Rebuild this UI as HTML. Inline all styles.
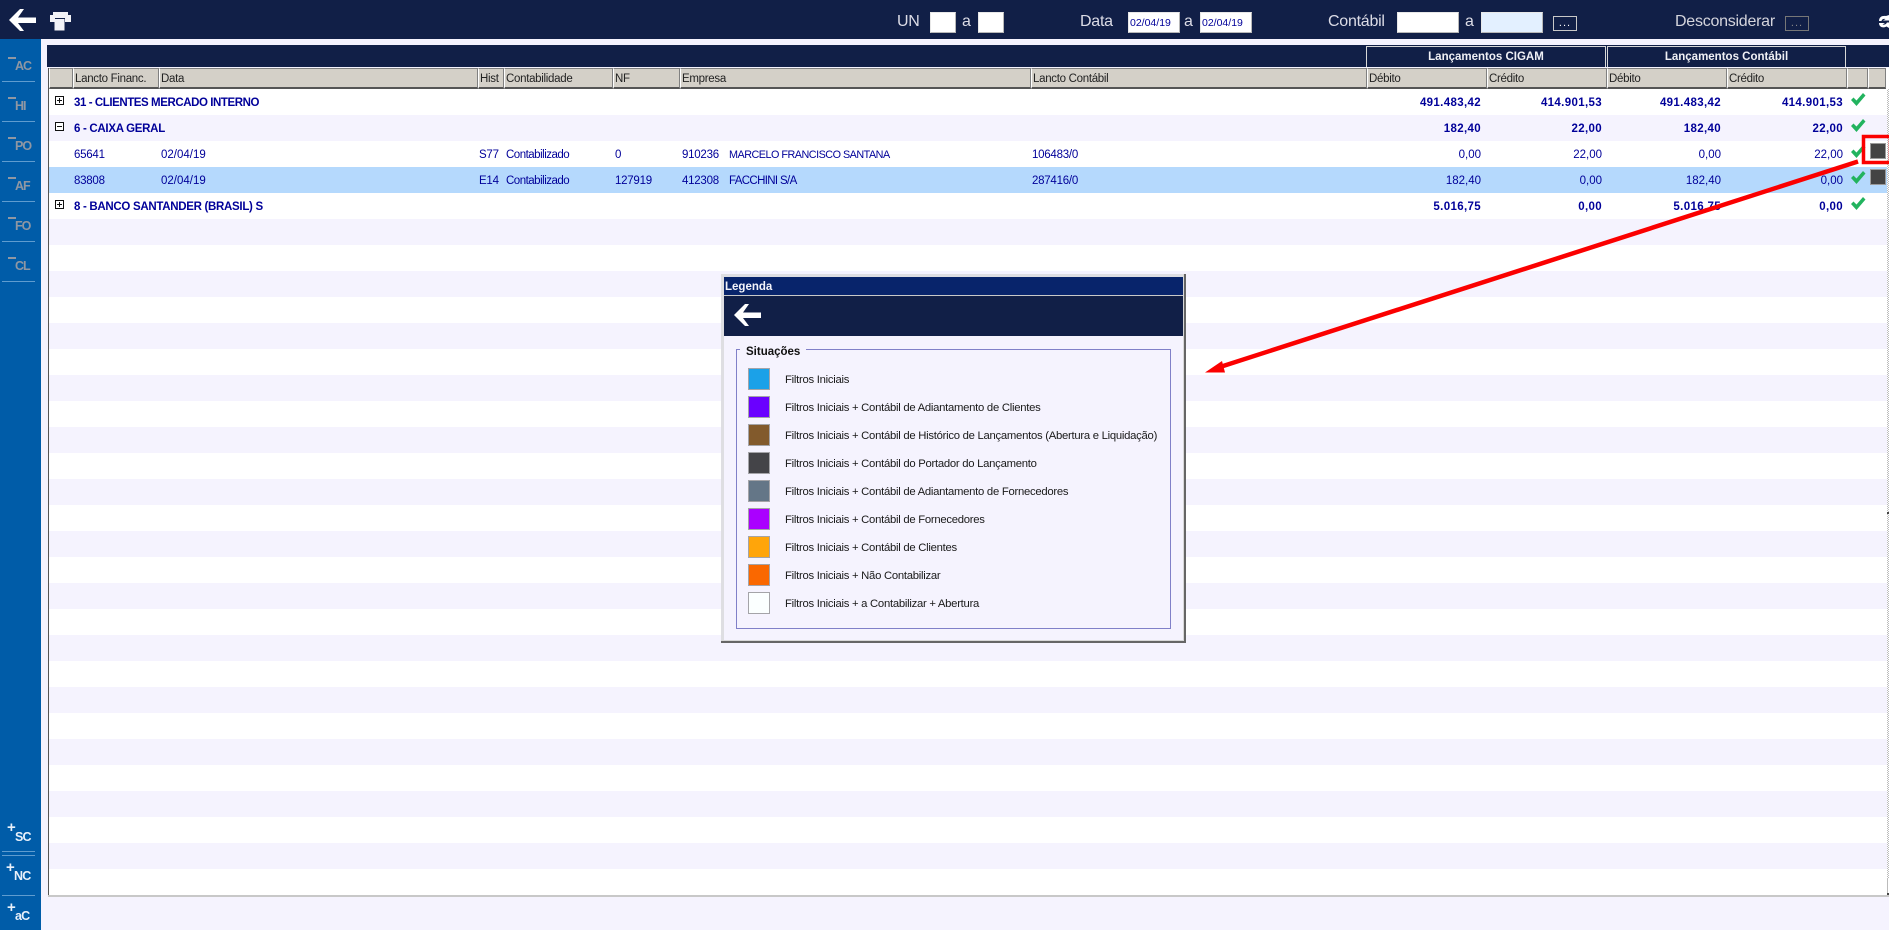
<!DOCTYPE html>
<html><head><meta charset="utf-8"><title>Legenda</title>
<style>
html,body{margin:0;padding:0;width:1889px;height:930px;overflow:hidden;background:#f5f3fe;font-family:"Liberation Sans",sans-serif}
div,span,svg{position:absolute}
#top{left:0;top:0;width:1889px;height:39px;background:#111f47}
#side{left:0;top:39px;width:41px;height:891px;background:#005ca8}
.lbl{color:#dcdce6;font-size:16px;line-height:20px;top:12px;white-space:nowrap;font-weight:400;letter-spacing:-.25px}
.inp{background:#fff;border:1px solid #e8e8e8;border-right-color:#b8b8b8;border-bottom-color:#b8b8b8;box-sizing:border-box;top:12px;height:21px;color:#000099;font-size:10.5px;line-height:20px;padding-left:1px;letter-spacing:0;white-space:nowrap}
.btn{box-sizing:border-box;top:16px;height:15px;border:1px solid #c8c8c8;color:#fff;font-size:11px;line-height:12px;text-align:center;letter-spacing:1px;background:#111f47}
.sl{background:#5f9ccf;left:2px;width:33px;height:1px}
.sm{background:#8f97a3;left:8px;width:8px;height:2px}
.st{color:#8f97a3;font-weight:bold;font-size:12.5px;line-height:14px;white-space:nowrap;letter-spacing:-1px}
.pw{color:#e8f0fa;font-weight:bold;font-size:15px;line-height:14px}
.bw{color:#e8f0fa;font-weight:bold;font-size:12.5px;line-height:14px;white-space:nowrap;letter-spacing:-.8px}
#grid{left:48px;top:68px;width:1841px;height:828px;background:repeating-linear-gradient(#fff 0,#fff 26px,#f5f3fe 26px,#f5f3fe 52px) 0 21px no-repeat;background-size:100% 806px;border-left:1px solid #555;box-sizing:border-box}
#hdr{left:47px;top:45px;width:1842px;height:22px;background:#111f47}
.gh{top:46px;height:21px;box-sizing:border-box;border:1px solid #d8d8d8;border-bottom:none;color:#f0f0f5;font-weight:bold;font-size:11.5px;line-height:21px;text-align:center}
.ch{top:68px;height:21px;box-sizing:border-box;background:#d4d0c8;border:1px solid #fff;border-right:1px solid #808080;border-bottom:2px solid #555;border-top:1px solid #808080;color:#222;font-size:11.5px;line-height:20px;padding-left:1px;white-space:nowrap;letter-spacing:-.3px}
.t{color:#000099;font-size:11.5px;line-height:28px;height:26px;white-space:nowrap;letter-spacing:-.25px}
.b{color:#000099;font-weight:bold;font-size:11.5px;line-height:28px;height:26px;white-space:nowrap;letter-spacing:-.3px}
.n{text-align:right;width:110px;letter-spacing:0}
.b.n{letter-spacing:.35px}
.sw{left:748px;width:22px;height:22px;box-sizing:border-box;border:1.5px solid #a4a4a8}
.lt{left:785px;color:#1a1a1a;font-size:11.3px;line-height:24px;white-space:nowrap;letter-spacing:-.27px}
.tree{left:55px;width:9px;height:9px;box-sizing:border-box;border:1px solid #111;background:#fff}
.sq{left:1870px;width:14px;height:14px;background:#444;border:1px solid #9a9a9a;box-sizing:content-box}
</style></head><body>

<div id="top"></div>
<svg style="left:9px;top:9px" width="28" height="22" viewBox="0 0 28 22"><path d="M0 11L11 0H15L9 8.500H27V14H9L15 22H11Z" fill="#fff"/></svg>
<svg style="left:50px;top:12px" width="21" height="19" viewBox="0 0 21 19"><path d="M3 0H18V3H3ZM0 3H21V10H15V6H5V10H0Z" fill="#f2f2f6"/><path d="M4.500 7H14.500V18.500H4.500Z" fill="#f2f2f6"/></svg>
<span class="lbl" style="left:897px">UN</span>
<div class="inp" style="left:930px;width:26px"></div>
<span class="lbl" style="left:962px">a</span>
<div class="inp" style="left:978px;width:26px"></div>
<span class="lbl" style="left:1080px">Data</span>
<div class="inp" style="left:1128px;width:52px">02/04/19</div>
<span class="lbl" style="left:1184px">a</span>
<div class="inp" style="left:1200px;width:52px">02/04/19</div>
<span class="lbl" style="left:1328px">Contábil</span>
<div class="inp" style="left:1397px;width:62px"></div>
<span class="lbl" style="left:1465px">a</span>
<div class="inp" style="left:1481px;width:62px;background:#e3f0ff"></div>
<div class="btn" style="left:1553px;width:24px">...</div>
<span class="lbl" style="left:1675px;color:#d4d4dc">Desconsiderar</span>
<div class="btn" style="left:1785px;width:24px;border-color:#777;color:#888">...</div>
<svg style="left:1878px;top:14px" width="11" height="15" viewBox="0 0 11 15"><path d="M1 7C1 3 4 1.500 8 2L11 1V6.500H5L7.500 5C5.500 4.500 4 5 3.500 7ZM1 9H7L4.500 10.500C6.500 11 8 10.500 9 8.500H11V14L8.500 12.500C5 14.500 1 13 1 9Z" fill="#fff"/></svg>

<div id="side"></div>
<div class="sm" style="top:57px"></div><span class="st" style="left:15px;top:59px">AC</span><div class="sl" style="top:81px"></div>
<div class="sm" style="top:97px"></div><span class="st" style="left:15px;top:99px">HI</span><div class="sl" style="top:121px"></div>
<div class="sm" style="top:137px"></div><span class="st" style="left:15px;top:139px">PO</span><div class="sl" style="top:161px"></div>
<div class="sm" style="top:177px"></div><span class="st" style="left:15px;top:179px">AF</span><div class="sl" style="top:201px"></div>
<div class="sm" style="top:217px"></div><span class="st" style="left:15px;top:219px">FO</span><div class="sl" style="top:241px"></div>
<div class="sm" style="top:257px"></div><span class="st" style="left:15px;top:259px">CL</span><div class="sl" style="top:281px"></div>

<span class="pw" style="left:7px;top:821px">+</span><span class="bw" style="left:15px;top:830px">SC</span>
<div class="sl" style="top:851px"></div><div class="sl" style="top:855px"></div>
<span class="pw" style="left:6px;top:861px">+</span><span class="bw" style="left:14px;top:869px">NC</span>
<div class="sl" style="top:895px"></div>
<span class="pw" style="left:7px;top:901px">+</span><span class="bw" style="left:15px;top:909px">aC</span>

<div id="hdr"></div>
<div class="gh" style="left:1366px;width:240px">Lançamentos CIGAM</div>
<div class="gh" style="left:1607px;width:239px">Lançamentos Contábil</div>
<div id="grid"></div>
<div style="left:48px;top:895px;width:1841px;height:2px;background:#c8c8c8"></div>

<div class="ch" style="left:49px;width:24px"></div>
<div class="ch" style="left:73px;width:86px">Lancto Financ.</div>
<div class="ch" style="left:159px;width:319px">Data</div>
<div class="ch" style="left:478px;width:26px">Hist</div>
<div class="ch" style="left:504px;width:109px">Contabilidade</div>
<div class="ch" style="left:613px;width:67px">NF</div>
<div class="ch" style="left:680px;width:351px">Empresa</div>
<div class="ch" style="left:1031px;width:336px">Lancto Contábil</div>
<div class="ch" style="left:1367px;width:120px">Débito</div>
<div class="ch" style="left:1487px;width:120px">Crédito</div>
<div class="ch" style="left:1607px;width:120px">Débito</div>
<div class="ch" style="left:1727px;width:120px">Crédito</div>
<div class="ch" style="left:1847px;width:21px"></div>
<div class="ch" style="left:1868px;width:18px"></div>

<div style="left:49px;top:167px;width:1838px;height:26px;background:#b5d9fd"></div>

<div class="tree" style="top:96px"><div style="left:1px;top:3px;width:5px;height:1px;background:#111"></div><div style="left:3px;top:1px;width:1px;height:5px;background:#111"></div></div>
<div class="tree" style="top:122px"><div style="left:1px;top:3px;width:5px;height:1px;background:#111"></div></div>
<div class="tree" style="top:200px"><div style="left:1px;top:3px;width:5px;height:1px;background:#111"></div><div style="left:3px;top:1px;width:1px;height:5px;background:#111"></div></div>

<span class="b" style="left:74px;top:89px;letter-spacing:-.43px">31 - CLIENTES MERCADO INTERNO</span>
<span class="b n" style="left:1371px;top:89px">491.483,42</span><span class="b n" style="left:1492px;top:89px">414.901,53</span><span class="b n" style="left:1611px;top:89px">491.483,42</span><span class="b n" style="left:1733px;top:89px">414.901,53</span>

<span class="b" style="left:74px;top:115px">6 - CAIXA GERAL</span>
<span class="b n" style="left:1371px;top:115px">182,40</span><span class="b n" style="left:1492px;top:115px">22,00</span><span class="b n" style="left:1611px;top:115px">182,40</span><span class="b n" style="left:1733px;top:115px">22,00</span>

<span class="t" style="left:74px;top:141px">65641</span><span class="t" style="left:161px;top:141px;letter-spacing:0">02/04/19</span><span class="t" style="left:479px;top:141px">S77</span><span class="t" style="left:506px;top:141px;letter-spacing:-.5px">Contabilizado</span><span class="t" style="left:615px;top:141px">0</span><span class="t" style="left:682px;top:141px">910236</span><span class="t" style="left:729px;top:141px;font-size:10.8px;letter-spacing:-.5px">MARCELO FRANCISCO SANTANA</span><span class="t" style="left:1032px;top:141px">106483/0</span>
<span class="t n" style="left:1371px;top:141px">0,00</span><span class="t n" style="left:1492px;top:141px">22,00</span><span class="t n" style="left:1611px;top:141px">0,00</span><span class="t n" style="left:1733px;top:141px">22,00</span>

<span class="t" style="left:74px;top:167px">83808</span><span class="t" style="left:161px;top:167px;letter-spacing:0">02/04/19</span><span class="t" style="left:479px;top:167px">E14</span><span class="t" style="left:506px;top:167px;letter-spacing:-.5px">Contabilizado</span><span class="t" style="left:615px;top:167px">127919</span><span class="t" style="left:682px;top:167px">412308</span><span class="t" style="left:729px;top:167px;letter-spacing:-.65px">FACCHINI S/A</span><span class="t" style="left:1032px;top:167px">287416/0</span>
<span class="t n" style="left:1371px;top:167px">182,40</span><span class="t n" style="left:1492px;top:167px">0,00</span><span class="t n" style="left:1611px;top:167px">182,40</span><span class="t n" style="left:1733px;top:167px">0,00</span>

<span class="b" style="left:74px;top:193px">8 - BANCO SANTANDER (BRASIL) S</span>
<span class="b n" style="left:1371px;top:193px">5.016,75</span><span class="b n" style="left:1492px;top:193px">0,00</span><span class="b n" style="left:1611px;top:193px">5.016,75</span><span class="b n" style="left:1733px;top:193px">0,00</span>

<svg style="left:1850px;top:92px" width="16" height="15" viewBox="0 0 16 15"><path d="M1 8L3.500 5.500L6.500 8.500L13 1L15.500 3.500L6.500 14Z" fill="#22b35e"/></svg>
<svg style="left:1850px;top:118px" width="16" height="15" viewBox="0 0 16 15"><path d="M1 8L3.500 5.500L6.500 8.500L13 1L15.500 3.500L6.500 14Z" fill="#22b35e"/></svg>
<svg style="left:1850px;top:144px" width="16" height="15" viewBox="0 0 16 15"><path d="M1 8L3.500 5.500L6.500 8.500L13 1L15.500 3.500L6.500 14Z" fill="#22b35e"/></svg>
<svg style="left:1850px;top:170px" width="16" height="15" viewBox="0 0 16 15"><path d="M1 8L3.500 5.500L6.500 8.500L13 1L15.500 3.500L6.500 14Z" fill="#22b35e"/></svg>
<svg style="left:1850px;top:196px" width="16" height="15" viewBox="0 0 16 15"><path d="M1 8L3.500 5.500L6.500 8.500L13 1L15.500 3.500L6.500 14Z" fill="#22b35e"/></svg>

<div class="sq" style="top:143px"></div>
<div class="sq" style="top:169px"></div>

<div style="left:1886px;top:68px;width:3px;height:21px;background:#fff"></div>
<div style="left:1887px;top:89px;width:2px;height:806px;background:repeating-conic-gradient(#bbb 0 25%,#fff 0 50%) 0 0/2px 2px"></div>
<div style="left:1887px;top:512px;width:2px;height:2px;background:#444"></div>
<div style="left:1887px;top:879px;width:2px;height:16px;background:#fff;border-left:1px solid #bbb;box-sizing:border-box"></div>
<div style="left:1887px;top:893px;width:2px;height:2px;background:#444"></div>

<!-- Legend -->
<div style="left:721px;top:274px;width:465px;height:369px;background:#f5f3fe;box-shadow:inset -2px -2px 0 #666,inset -3px -3px 0 #d8d8d8,inset 3px 3px 0 #dedee2"></div>
<div style="left:724px;top:277px;width:459px;height:18px;background:#08246b;color:#f4f4fa;font-weight:bold;font-size:11.5px;line-height:20px;padding-left:1px;box-sizing:border-box">Legenda</div>
<div style="left:724px;top:295px;width:459px;height:1px;background:#c8c8c8"></div>
<div style="left:724px;top:296px;width:459px;height:40px;background:#111f47"></div>
<svg style="left:734px;top:304px" width="28" height="22" viewBox="0 0 28 22"><path d="M0 11L11 0H15L9 8.500H27V14H9L15 22H11Z" fill="#fff"/></svg>
<div style="left:736px;top:349px;width:435px;height:280px;box-sizing:border-box;border:1px solid #8080c8"></div>
<div style="left:740px;top:345px;width:66px;height:10px;background:#f5f3fe"></div>
<span style="left:746px;top:345px;color:#111;font-weight:bold;font-size:11.5px;line-height:14px">Situações</span>

<div class="sw" style="top:368px;background:#1ba1e8"></div><span class="lt" style="top:368px">Filtros Iniciais</span>
<div class="sw" style="top:396px;background:#6a00ff"></div><span class="lt" style="top:396px">Filtros Iniciais + Contábil de Adiantamento de Clientes</span>
<div class="sw" style="top:424px;background:#825a2c"></div><span class="lt" style="top:424px">Filtros Iniciais + Contábil de Histórico de Lançamentos (Abertura e Liquidação)</span>
<div class="sw" style="top:452px;background:#444448"></div><span class="lt" style="top:452px">Filtros Iniciais + Contábil do Portador do Lançamento</span>
<div class="sw" style="top:480px;background:#647687"></div><span class="lt" style="top:480px">Filtros Iniciais + Contábil de Adiantamento de Fornecedores</span>
<div class="sw" style="top:508px;background:#aa00ff"></div><span class="lt" style="top:508px">Filtros Iniciais + Contábil de Fornecedores</span>
<div class="sw" style="top:536px;background:#ffa50a"></div><span class="lt" style="top:536px">Filtros Iniciais + Contábil de Clientes</span>
<div class="sw" style="top:564px;background:#fa6800"></div><span class="lt" style="top:564px">Filtros Iniciais + Não Contabilizar</span>
<div class="sw" style="top:592px;background:#fbffff"></div><span class="lt" style="top:592px">Filtros Iniciais + a Contabilizar + Abertura</span>

<!-- Red annotation -->
<svg style="left:0;top:0" width="1889" height="930" viewBox="0 0 1889 930"><rect x="1863.500" y="136.500" width="27" height="26" fill="none" stroke="#fb0000" stroke-width="3.500"/><path d="M1858 161.500L1220 367" stroke="#fb0000" stroke-width="4.500" fill="none"/><path d="M1205 372.500L1222 361L1225 372.500Z" fill="#fb0000"/></svg>
</body></html>
